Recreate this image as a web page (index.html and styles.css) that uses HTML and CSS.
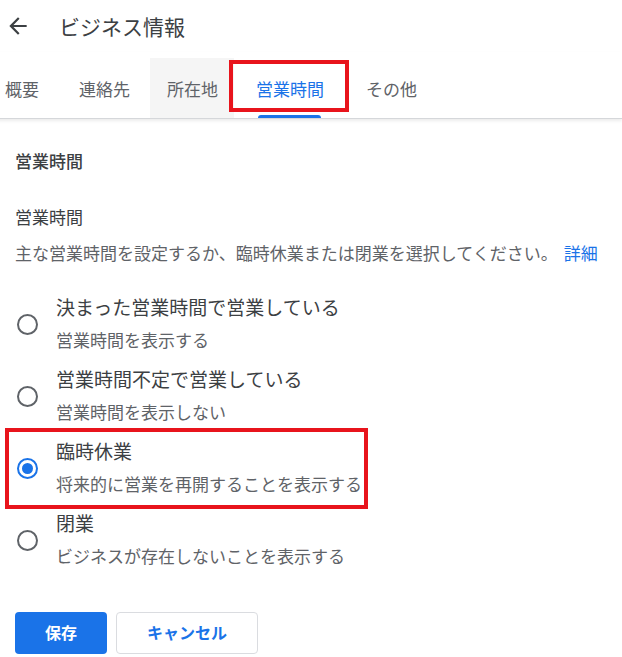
FILE: index.html
```html
<!DOCTYPE html>
<html lang="ja">
<head>
  <meta charset="UTF-8" />
  <title>ビジネス情報</title>
  <link rel="stylesheet" href="styles.css">
</head>
<body>

  <!-- Header -->
  <header class="top-bar">
    <svg class="back-icon" viewBox="0 0 24 24" width="26" height="26">
      <path d="M20 11H7.83l5.59-5.59L12 4l-8 8 8 8 1.41-1.41L7.83 13H20v-2z" fill="#3c4043"/>
    </svg>
    <h1 class="page-title">ビジネス情報</h1>
  </header>

  <!-- Tabs -->
  <nav class="tabs">
    <a href="#" class="tab">概要</a>
    <a href="#" class="tab">連絡先</a>
    <a href="#" class="tab hover">所在地</a>
    <a href="#" class="tab active marked"><span class="tab-label">営業時間</span></a>
    <a href="#" class="tab">その他</a>
  </nav>

  <!-- Hours form -->
  <main class="content">
    <h2 class="section-title">営業時間</h2>
    <h3 class="field-title">営業時間</h3>
    <p class="field-desc">主な営業時間を設定するか、臨時休業または閉業を選択してください。<a href="#" class="more-link">詳細</a></p>

    <div class="options">
      <label class="option">
        <span class="radio"></span>
        <span class="option-text">
          <span class="option-label">決まった営業時間で営業している</span>
          <span class="option-sub">営業時間を表示する</span>
        </span>
      </label>
      <label class="option">
        <span class="radio"></span>
        <span class="option-text">
          <span class="option-label">営業時間不定で営業している</span>
          <span class="option-sub">営業時間を表示しない</span>
        </span>
      </label>
      <label class="option marked">
        <span class="radio checked"></span>
        <span class="option-text">
          <span class="option-label">臨時休業</span>
          <span class="option-sub">将来的に営業を再開することを表示する</span>
        </span>
      </label>
      <label class="option">
        <span class="radio"></span>
        <span class="option-text">
          <span class="option-label">閉業</span>
          <span class="option-sub">ビジネスが存在しないことを表示する</span>
        </span>
      </label>
    </div>

    <div class="actions">
      <button class="btn btn-primary">保存</button>
      <button class="btn btn-outline">キャンセル</button>
    </div>
  </main>

</body>
</html>
```

FILE: styles.css
```css
*, *::before, *::after {
  box-sizing: border-box;
}

body {
  margin: 0;
  font-family: "Noto Sans CJK JP", "Noto Sans", Roboto, sans-serif;
  background-color: #fff;
  color: #3c4043;
  overflow: hidden;
}

/* Header */
.top-bar {
  display: flex;
  align-items: center;
  height: 52px;
  padding-left: 5px;
}

.back-icon {
  display: block;
}

.page-title {
  margin: 0 0 0 28px;
  font-size: 21px;
  font-weight: 400;
  color: #3c4043;
  line-height: 30px;
}

/* Tabs */
.tabs {
  display: flex;
  height: 67px;
  margin-left: -15px;
  padding-top: 6px;
  border-bottom: 1px solid #d5d7da;
  box-shadow: 0 2px 3px rgba(0, 0, 0, 0.08);
}

.tab {
  position: relative;
  display: flex;
  align-items: center;
  padding: 0 20px;
  font-size: 17px;
  color: #5f6368;
  text-decoration: none;
  white-space: nowrap;
}

.tab.hover {
  background: #f5f5f5;
  padding: 0 16px 0 17px;
}

.tab.active {
  color: #1a73e8;
  padding: 0 22px 0 22px;
}

.tab.active .tab-label {
  position: relative;
  align-self: stretch;
  display: flex;
  align-items: center;
}

.tab.active .tab-label::after {
  content: "";
  position: absolute;
  left: 2px;
  right: 3px;
  bottom: 0;
  height: 3px;
  background: #1a73e8;
  border-radius: 3px 3px 0 0;
}

.tab.marked::after {
  content: "";
  position: absolute;
  left: -5px;
  right: -3px;
  top: 2px;
  height: 52px;
  border: 4px solid #e8141c;
}

/* Content */
.content {
  padding: 30px 15px 0;
}

.section-title {
  margin: 0;
  font-size: 17px;
  font-weight: 500;
  line-height: 24px;
  color: #3c4043;
}

.field-title {
  margin: 32px 0 0;
  font-size: 17px;
  font-weight: 400;
  line-height: 24px;
  color: #3c4043;
}

.field-desc {
  margin: 12px 0 0;
  font-size: 17px;
  line-height: 24px;
  color: #5f6368;
  white-space: nowrap;
}

.more-link {
  margin-left: 6px;
  color: #1a73e8;
  text-decoration: none;
}

/* Radio options */
.options {
  margin-top: 23px;
}

.option {
  position: relative;
  display: flex;
  align-items: center;
  height: 72px;
  padding: 3px 0;
}

.option.marked::after {
  content: "";
  position: absolute;
  left: -10px;
  top: -4px;
  width: 363px;
  height: 81px;
  border: 4px solid #e8141c;
}

.radio {
  flex: none;
  width: 21px;
  height: 21px;
  margin-left: 2px;
  margin-right: 18px;
  border: 2px solid #5f6368;
  border-radius: 50%;
  display: flex;
  align-items: center;
  justify-content: center;
}

.radio.checked {
  border-color: #1a73e8;
}

.radio.checked::before {
  content: "";
  width: 11px;
  height: 11px;
  border-radius: 50%;
  background: #1a73e8;
}

.option-text {
  display: flex;
  flex-direction: column;
  align-self: stretch;
}

.option-label {
  font-size: 19px;
  line-height: 32px;
  color: #3c4043;
}

.option-sub {
  font-size: 17px;
  line-height: 34px;
  color: #5f6368;
}

/* Buttons */
.actions {
  display: flex;
  gap: 9px;
  margin-top: 36px;
}

.btn {
  height: 42px;
  border-radius: 4px;
  font-family: inherit;
  font-size: 16px;
  font-weight: 700;
  line-height: 1;
  padding-bottom: 3px;
  cursor: pointer;
}

.btn-primary {
  width: 92px;
  background: #1a73e8;
  color: #fff;
  border: none;
}

.btn-outline {
  width: 142px;
  background: #fff;
  color: #1a73e8;
  border: 1px solid #dadce0;
}
```
